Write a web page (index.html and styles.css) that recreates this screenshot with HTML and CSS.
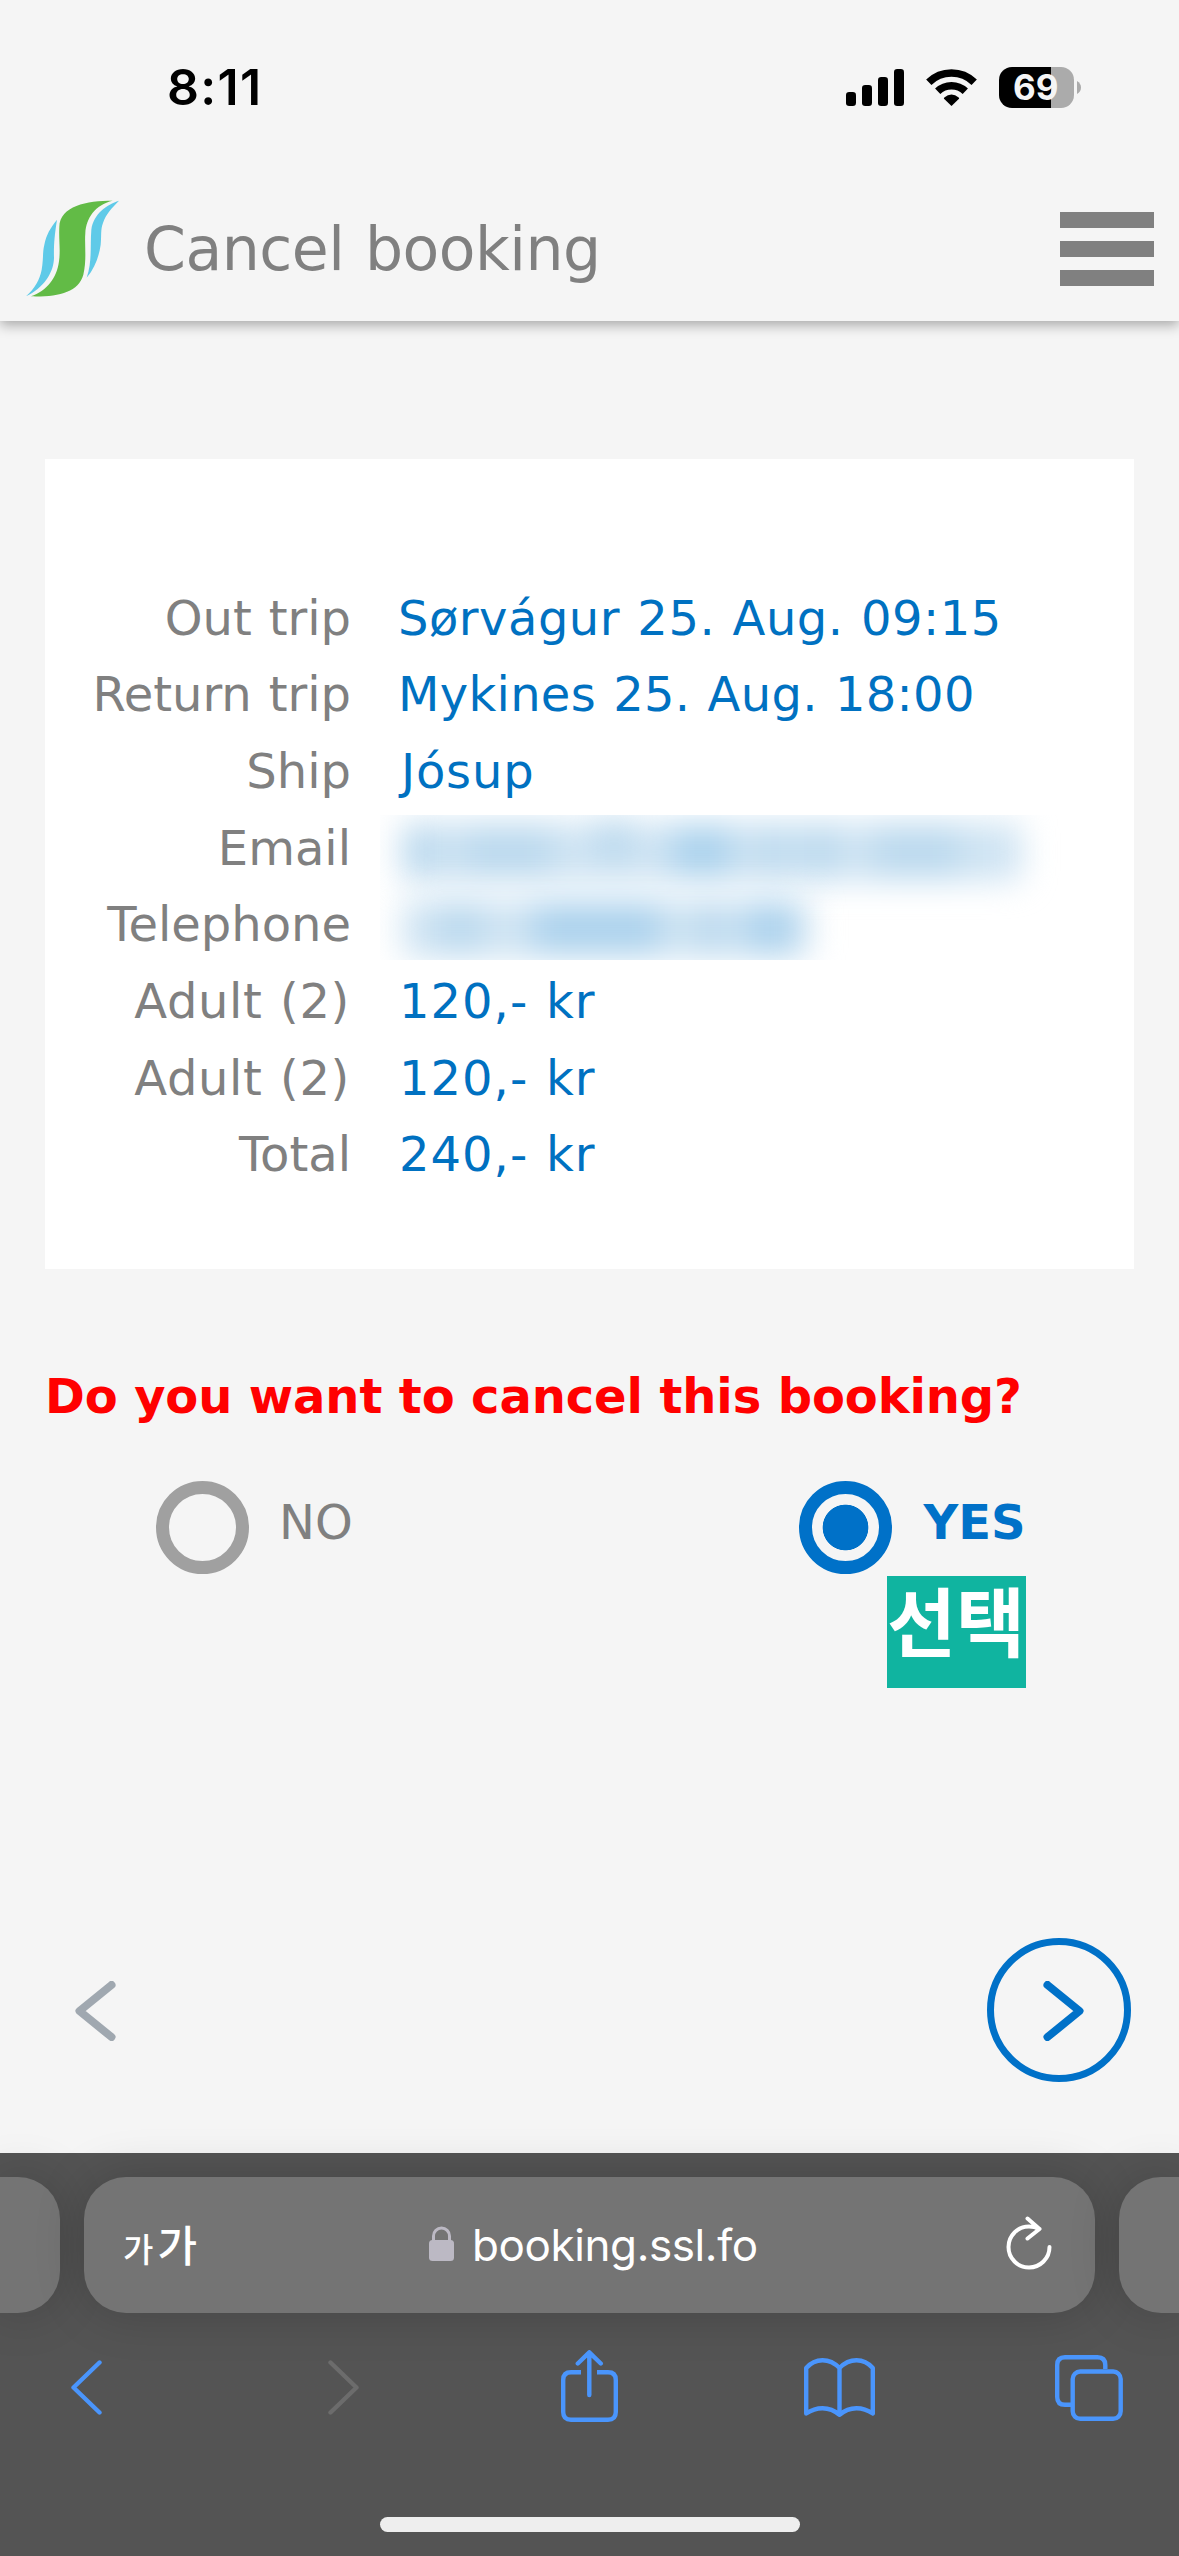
FILE: index.html
```html
<!DOCTYPE html>
<html lang="en">
<head>
<meta charset="utf-8">
<title>Cancel booking</title>
<link rel="stylesheet" href="styles.css">
</head>
<body>
<div class="screen">
  <div class="status">
    <span class="clock">8:11</span>
    <div class="indicators">
      <svg class="signal" viewBox="0 0 58 37">
        <rect x="0" y="23" width="10" height="14" rx="3.2"/>
        <rect x="16" y="16" width="10" height="21" rx="3.2"/>
        <rect x="32" y="8" width="10" height="29" rx="3.2"/>
        <rect x="48" y="0" width="10" height="37" rx="3.2"/>
      </svg>
      <svg class="wifi" viewBox="0 0 51 37">
        <g fill="none" stroke="#000" stroke-width="7.6">
          <path d="M2.8 13.3A32.5 32.5 0 0 1 48.2 13.3"/>
          <path d="M11.7 22.2A20 20 0 0 1 39.3 22.2"/>
        </g>
        <path d="M25.5 37L18 29.7Q17.6 29 18.3 28.4Q25.5 22.7 32.7 28.4Q33.4 29 33 29.7Z"/>
      </svg>
      <div class="battery"><span>69</span></div>
      <svg class="nub" viewBox="0 0 4 13"><path d="M0 0Q4 2.5 4 6.5Q4 10.5 0 13Z"/></svg>
    </div>
  </div>

  <header class="header">
    <svg class="logo" viewBox="30 28 285 296">
      <path fill="#62bb46" d="M293 33C215 33 135 48 133 112C131 150 137 180 132 215C126 265 95 305 48 320C130 322 190 308 205 255C216 210 208 165 211 130C214 85 240 45 293 33Z"/>
      <path fill="#5fcae8" d="M312 33C275 45 236 72 229 120C225 170 232 215 215 264C240 235 252 200 257 165C260 140 256 120 264 100C272 75 290 55 312 33Z"/>
      <path fill="#5fcae8" d="M126 90C118 140 116 170 117 205C116 250 85 295 33 320C60 295 74 270 80 240C86 205 82 190 88 165C94 135 106 115 126 90Z"/>
    </svg>
    <h1 class="title">Cancel booking</h1>
    <div class="menu"><i></i><i></i><i></i></div>
  </header>

  <main class="content">
    <dl class="card">
      <dt>Out trip</dt><dd class="trip">Sørvágur 25. Aug. 09:15</dd>
      <dt>Return trip</dt><dd class="trip return">Mykines 25. Aug. 18:00</dd>
      <dt>Ship</dt><dd class="ship">Jósup</dd>
      <dt>Email</dt>
      <dd class="private">
        <div class="smudge email"><i></i><i></i><i></i><i></i><i></i><i></i><i></i></div>
        <div class="smudge phone"><i></i><i></i><i></i><i></i></div>
      </dd>
      <dt>Telephone</dt>
      <dt class="fare">Adult (2)</dt><dd class="price">120,- kr</dd>
      <dt class="fare">Adult (2)</dt><dd class="price">120,- kr</dd>
      <dt>Total</dt><dd class="price">240,- kr</dd>
    </dl>

    <p class="question">Do you want to cancel this booking?</p>
    <div class="options">
      <div class="option"><span class="radio"></span><span class="answer">NO</span></div>
      <div class="option chosen"><span class="radio"></span><span class="answer">YES</span><span class="note">선택</span></div>
    </div>

    <div class="steps">
      <svg class="prev" viewBox="0 0 41 60"><path d="M36.5 4L4.5 30L36.5 56"/></svg>
      <div class="next"><svg viewBox="0 0 41 60"><path d="M4.5 4L36.5 30L4.5 56"/></svg></div>
    </div>
  </main>

  <footer class="browser">
    <div class="tabs">
      <div class="tab side"></div>
      <div class="tab current">
        <div class="textsize"><span>가</span>가</div>
        <div class="address">
          <svg class="lock" viewBox="0 0 25 35"><rect x="0" y="14" width="25" height="21" rx="3.5" fill="#bcb9c4"/><path d="M4.5 15V10a8 8 0 0 1 16 0V15" fill="none" stroke="#bcb9c4" stroke-width="3"/></svg>
          <span>booking.ssl.fo</span>
        </div>
        <svg class="reload" viewBox="0 0 46 54"><path d="M43.5 31A20.5 20.5 0 1 1 23 10.500Q28 10.500 33.500 12.800M21.500 2.500L33.500 13L21.500 22.500"/></svg>
      </div>
      <div class="tab side"></div>
    </div>
    <nav class="toolbar">
      <svg class="back" viewBox="0 0 31 55"><path d="M28.500 2.500L2.500 27.500L28.500 52.500"/></svg>
      <svg class="forward" viewBox="0 0 31 55"><path d="M2.500 2.500L28.500 27.500L2.500 52.500"/></svg>
      <svg class="share" viewBox="0 0 57 72"><path stroke-linecap="butt" d="M20 22.300H10Q2.200 22.300 2.200 30V62Q2.200 69.700 10 69.700H47Q54.800 69.700 54.800 62V30Q54.800 22.300 47 22.300H36"/><path d="M28.300 45V2.500M16.800 13.500L28.300 2.300L39.800 13.500"/></svg>
      <svg class="book" viewBox="0 0 71 59"><path d="M35.500 10Q28 2.200 18.500 2.200Q9 2.200 2.200 10V55.500Q10 50.200 18.500 50.200Q28 50.200 35.500 56.800Q43 50.200 52.500 50.200Q61 50.200 68.800 55.500V10Q62 2.200 52.500 2.200Q43 2.200 35.500 10V56"/></svg>
      <svg class="windows" viewBox="0 0 68 66"><path stroke-linecap="butt" d="M50.300 14V10Q50.300 2.200 42.500 2.200H10Q2.200 2.200 2.200 10V42Q2.200 49.800 10 49.800H17"/><rect x="17.700" y="16.500" width="48" height="47.300" rx="7.500"/></svg>
    </nav>
    <div class="home"></div>
  </footer>
</div>
</body>
</html>
```
FILE: styles.css
```css
* { box-sizing: border-box; }
body { margin: 0; background: #f5f5f5; font-family: Verdana, "DejaVu Sans", sans-serif; }
svg { display: block; flex: none; }
.screen { width: 1179px; height: 2556px; overflow: hidden; display: flex; flex-direction: column; }

.status { height: 177px; padding: 57px 98px 0 167px; display: flex; justify-content: space-between; }
.clock { font: 600 50px/60px Inter, sans-serif; letter-spacing: 1.3px; color: #000; }
.indicators { display: flex; height: 60px; align-items: center; }
.signal { width: 58px; height: 37px; margin-right: 22px; }
.wifi { width: 51px; height: 37px; margin-right: 22px; }
.battery { width: 75px; height: 41px; border-radius: 13px; background: linear-gradient(90deg, #000 52px, #ababab 52px); color: #f5f5f5; font: 700 35px/41px Inter, sans-serif; padding-left: 14px; }
.nub { width: 4px; height: 13px; margin-left: 3px; fill: #ababab; }

.header { height: 144px; padding: 0 25px; display: flex; position: relative; box-shadow: 0 4px 12px rgba(0, 0, 0, .32); clip-path: inset(0 0 -30px 0); }
.logo { width: 95px; height: 98.700px; margin: 22.300px 24px 0 0; }
.title { margin: 37px 0 0; font-size: 60px; line-height: 70px; font-weight: 400; color: #808080; letter-spacing: -.48px; word-spacing: 2px; }
.menu { width: 94px; margin: 34.500px 0 0 auto; display: flex; flex-direction: column; gap: 13px; }
.menu i { height: 16.300px; background: #808080; }

.content { flex: 1; padding: 138px 45px 0; }
.card { height: 810px; margin: 0; padding: 120.500px 0 0; background: #fff; display: grid; grid-template-columns: 306px 1fr; column-gap: 47px; grid-auto-rows: 76.700px; font-size: 48px; line-height: 76.700px; word-spacing: 1.600px; white-space: nowrap; }
.card dt { grid-column: 1; color: #808080; text-align: right; letter-spacing: 0; }
.card dd { grid-column: 2; margin: 0; color: #0071c1; }
.card .fare { letter-spacing: .65px; padding-right: 1px; }
.card .trip { letter-spacing: .5px; }
.card .return { letter-spacing: .3px; }
.card .ship { padding-left: 3px; letter-spacing: .8px; }
.card .price { letter-spacing: 1px; padding-left: 1px; }
.card .private { grid-row: 4 / span 2; height: 145px; margin: 5px 0 0 -18px; padding: 8px 0 0 22px; overflow: hidden; }

.smudge { height: 58px; display: flex; gap: 5px; border-radius: 10px; filter: blur(16px); background: #cfe4f3; }
.smudge i { height: 50px; margin-top: 3px; background: #bbd9ee; }
.email { width: 620px; }
.email i { width: 36px; }
.email i:nth-child(2) { width: 90px; margin-left: 20px; }
.email i:nth-child(3) { width: 36px; margin-left: 38px; height: 44px; margin-top: -4px; }
.email i:nth-child(4) { width: 60px; margin-left: 35px; background: #abd2ed; }
.email i:nth-child(5) { width: 30px; margin-left: 20px; }
.email i:nth-child(6) { width: 36px; margin-left: 10px; }
.email i:nth-child(7) { width: 86px; margin-left: 30px; }
.phone { width: 408px; margin-top: 19px; }
.phone i:nth-child(1) { width: 44px; margin-left: 36px; }
.phone i:nth-child(2) { width: 128px; margin-left: 46px; background: #acd2ed; }
.phone i:nth-child(3) { width: 32px; margin-left: 28px; }
.phone i:nth-child(4) { width: 50px; margin-left: 14px; background: #acd2ed; }

.question { margin: 97px 0 0; font-size: 48px; line-height: 60px; font-weight: 700; color: #f00; letter-spacing: -.12px; white-space: nowrap; }
.options { display: flex; margin-top: 54.500px; padding-left: 111px; }
.option { width: 642.500px; flex: none; display: flex; position: relative; color: #808080; font-size: 48px; }
.radio { width: 93px; height: 93px; border: 13px solid #a0a0a0; border-radius: 50%; }
.answer { margin-left: 30px; line-height: 60px; padding-top: 11.500px; }
.chosen { width: 335px; color: #0071c8; font-weight: 700; }
.chosen .radio { border-color: #0071c8; background: radial-gradient(circle, #0071c8 22.500px, transparent 23.200px); }
.chosen .answer { margin-left: 32px; }
.note { position: absolute; left: 88.500px; top: 95.500px; width: 139px; height: 112px; background: #10b4a0; color: #fff; font: 700 75px/86px "Noto Sans CJK KR", sans-serif; white-space: nowrap; }

.steps { margin-top: 364px; padding: 0 3px 0 30px; display: flex; justify-content: space-between; align-items: center; }
.steps path { fill: none; stroke: #a0a8b0; stroke-width: 8px; stroke-linecap: round; stroke-linejoin: round; }
.steps svg { width: 41px; height: 60px; position: relative; top: 1.500px; }
.next { width: 144px; height: 144px; border: 7px solid #0071c8; border-radius: 50%; display: grid; place-items: center; padding-left: 9px; }
.next path { stroke: #0071c8; }

.browser { height: 403px; background: #545454; padding-top: 24px; }
.tabs { display: flex; gap: 24px; height: 136px; }
.tab { background: #747474; border-radius: 42px; box-shadow: 0 0 50px rgba(0, 0, 0, .18); }
.side { width: 60px; flex: none; }
.side:first-child { border-radius: 0 42px 42px 0; }
.side:last-child { border-radius: 42px 0 0 42px; }
.current { width: 1011px; flex: none; display: flex; align-items: center; color: #fff; }
.textsize { width: 345px; padding-left: 39px; font: 500 43px/60px "Noto Sans CJK KR", sans-serif; }
.textsize span { font-size: 33px; margin-right: 4px; }
.address { flex: 1; display: flex; align-items: center; gap: 18px; font: 400 44px/60px Inter, sans-serif; letter-spacing: -.4px; }
.lock { width: 25px; height: 35px; margin-top: -3px; }
.reload { width: 46px; height: 54px; margin: 0 43px 4px 0; fill: none; stroke: #fff; stroke-width: 4px; stroke-linecap: round; stroke-linejoin: round; }
.toolbar { display: flex; align-items: center; height: 72px; margin-top: 37px; padding-left: 71px; }
.toolbar svg { fill: none; stroke: #4a95fc; stroke-width: 4.400px; stroke-linecap: round; stroke-linejoin: round; }
.back { width: 31px; height: 55px; margin-right: 226px; margin-top: 3px; }
.forward { width: 31px; height: 55px; margin-right: 202px; margin-top: 3px; }
.toolbar .forward { stroke: #6c6c6c; }
.share { width: 57px; height: 72px; margin-right: 186px; }
.book { width: 71px; height: 59px; margin-right: 180px; margin-top: 3px; }
.windows { width: 68px; height: 66px; margin-top: 4px; }
.home { width: 420px; height: 15px; border-radius: 8px; background: #eee; margin: 95px auto 0; }
```
